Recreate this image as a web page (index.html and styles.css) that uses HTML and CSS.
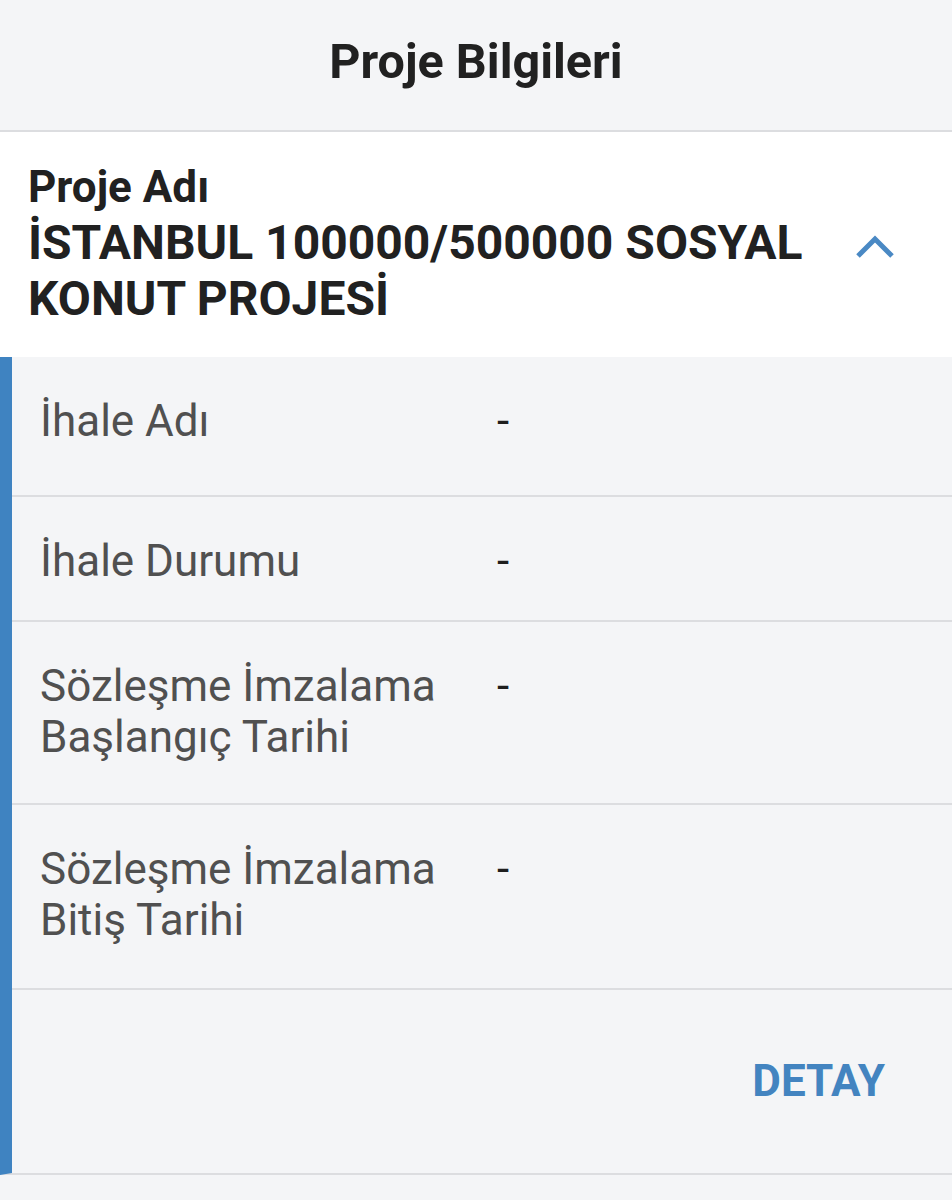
FILE: index.html
```html
<!DOCTYPE html>
<html lang="tr">
<head>
<meta charset="utf-8">
<title>Proje Bilgileri</title>
<link rel="stylesheet" href="styles.css">
</head>
<body>
<header class="topbar">Proje Bilgileri</header>
<section class="project">
  <div class="project-text">
    <div class="project-label">Proje Adı</div>
    <div class="project-name">İSTANBUL 100000/500000 SOSYAL KONUT PROJESİ</div>
  </div>
  <svg class="chevron" viewBox="0 0 40 24" width="40" height="24" aria-hidden="true">
    <polyline points="3,21 20,4 37,21" fill="none" stroke="#4a89c4" stroke-width="5"/>
  </svg>
</section>
<div class="card">
  <div class="row row-1">
    <div class="label">İhale Adı</div>
    <div class="value">-</div>
  </div>
  <div class="row row-2">
    <div class="label">İhale Durumu</div>
    <div class="value">-</div>
  </div>
  <div class="row row-3">
    <div class="label">Sözleşme İmzalama Başlangıç Tarihi</div>
    <div class="value">-</div>
  </div>
  <div class="row row-4">
    <div class="label">Sözleşme İmzalama Bitiş Tarihi</div>
    <div class="value">-</div>
  </div>
  <div class="actions">
    <span class="detail-btn">DETAY</span>
  </div>
</div>
</body>
</html>
```
FILE: styles.css
```css
html, body {
  margin: 0;
  padding: 0;
}
body {
  background: #f4f5f7;
  font-family: Roboto, "Noto Sans", sans-serif;
  width: 952px;
  overflow: hidden;
}
.topbar {
  padding: 34px 0 40px;
  text-align: center;
  font-weight: 700;
  font-size: 48.5px;
  line-height: 56px;
  color: #212121;
  border-bottom: 2px solid #dcdde0;
}
.project {
  background: #ffffff;
  display: flex;
  align-items: center;
  padding: 28px 0 30px 28px;
}
.project-text {
  flex: 1;
  max-width: 820px;
}
.project-label {
  font-weight: 700;
  font-size: 44px;
  line-height: 55px;
  color: #212121;
}
.project-name {
  font-weight: 700;
  font-size: 48px;
  line-height: 56px;
  color: #212121;
}
.chevron {
  flex: none;
  margin-left: auto;
  margin-right: 57px;
  margin-top: 6px;
}
.card {
  border-left: 12px solid #3f83c1;
  border-bottom: 2px solid #dcdde0;
  background: #f4f5f7;
}
.row {
  display: grid;
  grid-template-columns: 440px 1fr;
  column-gap: 17px;
  padding: 39px 0 40px 28px;
  border-bottom: 2px solid #dcdde0;
  font-size: 44px;
  line-height: 51px;
}
.row-1 { padding-bottom: 48px; }
.row-2 { padding-bottom: 33px; }
.row-3 { padding-bottom: 40px; }
.row-4 { padding-bottom: 42px; }
.label {
  color: #505050;
}
.value {
  color: #1e1e1e;
}
.actions {
  height: 183px;
  display: flex;
  align-items: center;
  justify-content: flex-end;
  padding-right: 67px;
}
.detail-btn {
  font-weight: 700;
  font-size: 44px;
  line-height: 51px;
  color: #4384c0;
}
```
